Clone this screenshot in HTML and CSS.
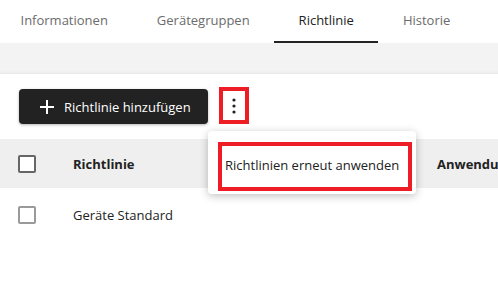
FILE: index.html
```html
<!DOCTYPE html>
<html lang="de">
<head>
    <meta charset="UTF-8">
    <meta name="viewport" content="width=device-width, initial-scale=1.0">
    <title>Richtlinie</title>
    <link rel="stylesheet" href="styles.css">
</head>
<body>
    <nav class="tabs">
        <a class="tab">Informationen</a>
        <a class="tab">Gerätegruppen</a>
        <a class="tab active">Richtlinie</a>
        <a class="tab">Historie</a>
    </nav>
    <div class="strip"></div>

    <div class="toolbar">
        <button class="add-btn">
            <svg width="14" height="14" viewBox="0 0 14 14"><path d="M7 0v14M0 7h14" stroke="#fff" stroke-width="2"/></svg>
            Richtlinie hinzufügen
        </button>
        <span class="more mark">
            <svg width="4" height="16" viewBox="0 0 4 16"><circle cx="2" cy="2" r="1.6" fill="#222"/><circle cx="2" cy="8" r="1.6" fill="#222"/><circle cx="2" cy="14" r="1.6" fill="#222"/></svg>
        </span>
    </div>

    <div class="grid">
        <div class="row head">
            <span class="check"></span>
            <span class="cell">Richtlinie</span>
            <span class="cell">Anwendung</span>
        </div>
        <div class="row">
            <span class="check light"></span>
            <span class="cell">Geräte Standard</span>
            <span class="cell"></span>
        </div>
    </div>

    <div class="menu">
        <div class="menu-item mark">Richtlinien erneut anwenden</div>
    </div>
</body>
</html>
```

FILE: styles.css
```css
body {
    margin: 0;
    font-family: "Open Sans", "Noto Sans", sans-serif;
    font-size: 13px;
    color: #222;
    background: #fff;
    overflow: hidden;
    position: relative;
    width: 498px;
    height: 283px;
}

.tabs {
    display: flex;
    height: 43px;
    margin-left: -4px;
}
.tab {
    padding: 0 24.5px;
    line-height: 41px;
    color: #6b6b6b;
    border-bottom: 2px solid transparent;
    white-space: nowrap;
}
.tab.active {
    color: #222;
    border-bottom-color: #222;
}

.strip {
    height: 31px;
    background: #f3f3f3;
    box-shadow: inset 0 -3px 3px -2px rgba(0, 0, 0, 0.06);
}

.toolbar {
    display: flex;
    align-items: flex-end;
    gap: 11px;
    padding: 13px 0 0 19px;
    height: 37px;
}
.add-btn {
    display: flex;
    align-items: center;
    gap: 10px;
    height: 35px;
    padding: 0 17px 0 21px;
    background: #222;
    color: #fff;
    border: none;
    border-radius: 4px;
    font: inherit;
    box-shadow: 0 1px 3px rgba(0, 0, 0, 0.3);
}

.mark {
    border: 4px solid #ee1c25;
}
.more {
    width: 22px;
    height: 29px;
    display: flex;
    align-items: center;
    justify-content: center;
}

.grid {
    margin-top: 15px;
    width: 700px;
}
.row {
    display: grid;
    grid-template-columns: 73px 364px auto;
    align-items: center;
    height: 54px;
}
.row.head {
    height: 49px;
    background: #efefef;
    font-weight: 700;
}
.check {
    width: 14px;
    height: 14px;
    margin-left: 18px;
    border: 2px solid #666;
    border-radius: 2px;
    background: #fff;
}
.check.light {
    border-color: #9a9a9a;
}

.menu {
    position: absolute;
    left: 208px;
    top: 131px;
    width: 208px;
    height: 63px;
    background: #fff;
    border-radius: 4px;
    box-shadow: 0 2px 8px rgba(0, 0, 0, 0.25);
}
.menu-item {
    margin: 11px 4px 0 10px;
    height: 41px;
    line-height: 39px;
    padding-left: 3px;
    white-space: nowrap;
}
```
